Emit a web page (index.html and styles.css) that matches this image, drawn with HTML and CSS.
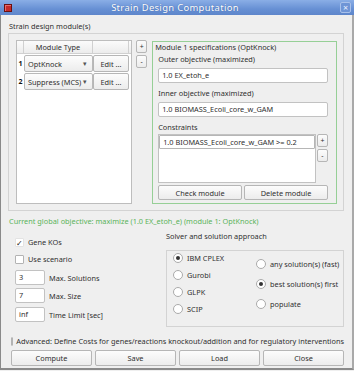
FILE: index.html
```html
<!DOCTYPE html>
<html>
<head>
<meta charset="utf-8">
<link rel="stylesheet" href="styles.css">
</head>
<body>
<div class="window">
  <div class="titlebar">
    <span class="app-icon"></span>
    <span class="title">Strain Design Computation</span>
    <span class="close-btn">×</span>
  </div>
  <div class="content">
    <div class="section-label">Strain design module(s)</div>
    <div class="modules-frame">
      <div class="table">
        <div class="trow thead">
          <div class="vh"></div>
          <div class="c-type">Module Type</div>
          <div class="c-edit"></div>
          <div class="c-rest"></div>
        </div>
        <div class="trow tr">
          <div class="vh num">1</div>
          <div class="c-type"><div class="combo"><span>OptKnock</span><span class="arrow">▾</span></div></div>
          <div class="c-edit"><div class="btn cellbtn">Edit ...</div></div>
        </div>
        <div class="trow tr">
          <div class="vh num">2</div>
          <div class="c-type"><div class="combo"><span>Suppress (MCS)</span><span class="arrow">▾</span></div></div>
          <div class="c-edit"><div class="btn cellbtn">Edit ...</div></div>
        </div>
      </div>
      <div class="pm-col">
        <div class="btn small">+</div>
        <div class="btn small">-</div>
      </div>
      <div class="spec-group">
        <div class="spec-title">Module 1 specifications (OptKnock)</div>
        <div class="lbl">Outer objective (maximized)</div>
        <div class="input wide">1.0 EX_etoh_e</div>
        <div class="lbl">Inner objective (maximized)</div>
        <div class="input wide">1.0 BIOMASS_Ecoli_core_w_GAM</div>
        <div class="lbl">Constraints</div>
        <div class="constraints">
          <div class="list">
            <div class="list-item">1.0 BIOMASS_Ecoli_core_w_GAM &gt;= 0.2</div>
          </div>
          <div class="pm-col tight">
            <div class="btn small">+</div>
            <div class="btn small">-</div>
          </div>
        </div>
        <div class="spec-buttons">
          <div class="btn">Check module</div>
          <div class="btn">Delete module</div>
        </div>
      </div>
    </div>
    <div class="global-obj">Current global objective: maximize (1.0 EX_etoh_e) (module 1: OptKnock)</div>
    <div class="lower">
      <div class="options">
        <div class="check-row first"><span class="checkbox checked">✓</span>Gene KOs</div>
        <div class="check-row"><span class="checkbox"></span>Use scenario</div>
        <div class="field-row r1"><div class="input num-in">3</div>Max. Solutions</div>
        <div class="field-row r2"><div class="input num-in">7</div>Max. Size</div>
        <div class="field-row r3"><div class="input num-in">inf</div>Time Limit [sec]</div>
      </div>
      <div class="solver">
        <div class="solver-label">Solver and solution approach</div>
        <div class="solver-box">
          <div class="radio-col left">
            <div class="radio-row"><span class="radio on"></span>IBM CPLEX</div>
            <div class="radio-row"><span class="radio"></span>Gurobi</div>
            <div class="radio-row"><span class="radio"></span>GLPK</div>
            <div class="radio-row"><span class="radio"></span>SCIP</div>
          </div>
          <div class="radio-col right">
            <div class="radio-row"><span class="radio"></span>any solution(s) (fast)</div>
            <div class="radio-row"><span class="radio on"></span>best solution(s) first</div>
            <div class="radio-row"><span class="radio"></span>populate</div>
          </div>
        </div>
      </div>
    </div>
    <div class="advanced"><span class="checkbox"></span>Advanced: Define Costs for genes/reactions knockout/addition and for regulatory interventions</div>
    <div class="bottom-buttons">
      <div class="btn">Compute</div>
      <div class="btn">Save</div>
      <div class="btn">Load</div>
      <div class="btn">Close</div>
    </div>
  </div>
</div>
</body>
</html>
```

FILE: styles.css
```css
* { box-sizing: border-box; }
html, body { margin: 0; padding: 0; }
body {
  width: 354px;
  height: 371px;
  overflow: hidden;
  font-family: "Noto Sans", sans-serif;
  font-size: 7.35px;
  color: #2f2f2f;
  background: #efefef;
  white-space: nowrap;
}
.window {
  width: 354px;
  height: 370px;
  background: #efefef;
  border-left: 1px solid #8a8a8a;
  border-right: 2px solid #a9a9a9;
  border-bottom: 2px solid #8a8a8a;
  display: flex;
  flex-direction: column;
}
.titlebar {
  height: 15px;
  flex: none;
  background: linear-gradient(#8aaee6, #6790d4 60%, #5e86cb);
  display: flex;
  align-items: center;
  margin-left: -1px;
  margin-right: -2px;
}
.app-icon {
  width: 8px;
  height: 8px;
  margin-left: 4px;
  background: #c42a2a;
  border: 1px solid #6a1010;
  box-shadow: inset 1px 1px 0 #e86a6a;
}
.title {
  flex: 1;
  text-align: center;
  color: #fff;
  font-size: 9.4px;
  letter-spacing: 0.35px;
  text-shadow: 0 0 1px #3b5f9e;
  margin-left: -2px;
}
.close-btn {
  width: 11px;
  height: 11px;
  margin-right: 3px;
  border: 1px solid #a9c1ea;
  border-radius: 2px;
  background: #6f95d6;
  color: #e8f0ff;
  font-size: 9px;
  line-height: 9px;
  text-align: center;
}
.content {
  flex: 1;
  padding: 5px 8px 0 7px;
  display: flex;
  flex-direction: column;
}
.section-label {
  height: 12px;
  line-height: 12px;
  padding-left: 1px;
  margin-bottom: 1px;
}
.modules-frame {
  height: 178px;
  border: 1px solid #d3d3d3;
  padding: 6px 6px 6px 7px;
  display: flex;
  align-items: stretch;
}
.table {
  width: 117px;
  background: #fff;
  border: 1px solid #bdbdbd;
  display: flex;
  flex-direction: column;
  gap: 1px;
}
.trow { display: flex; }
.thead {
  height: 13px;
  line-height: 12px;
  background: linear-gradient(#fbfbfb, #ececec);
  border-bottom: 1px solid #d0d0d0;
}
.thead > div { border-right: 1px solid #d0d0d0; }
.thead .c-rest { border-right: none; flex: 1; }
.vh { width: 7px; flex: none; }
.c-type { width: 69px; text-align: center; flex: none; }
.c-edit { width: 36px; flex: none; }
.tr { height: 17px; }
.tr .c-type, .tr .c-edit { height: 17px; }
.num {
  font-weight: bold;
  color: #111;
  text-align: center;
  line-height: 17px;
  font-size: 7px;
}
.combo {
  height: 17px;
  border: 1px solid #b9b9b9;
  border-radius: 2px;
  background: linear-gradient(#fdfdfd, #ececec);
  display: flex;
  align-items: center;
  justify-content: space-between;
  padding: 0 5px 0 3px;
  text-align: left;
  overflow: hidden;
}
.arrow { font-size: 7px; color: #555; }
.btn {
  border: 1px solid #b6b6b6;
  border-radius: 2px;
  background: linear-gradient(#fcfcfc, #ececec);
  display: flex;
  align-items: center;
  justify-content: center;
  color: #2f2f2f;
}
.cellbtn { height: 17px; }
.pm-col {
  display: flex;
  flex-direction: column;
  gap: 2px;
  margin-left: 4px;
  width: 11px;
}
.pm-col .small {
  height: 13px;
  font-size: 7px;
}
.pm-col.tight { margin-left: 1px; }
.spec-group {
  margin-left: 5px;
  margin-top: 1px;
  width: 186px;
  border: 1px solid #96cf96;
  padding: 0 8px 0 1px;
  display: flex;
  flex-direction: column;
}
.spec-title { height: 10px; line-height: 10px; padding-left: 1px; }
.lbl { height: 12px; line-height: 12px; padding-left: 4px; margin-top: 1px; }
.input {
  background: #fff;
  border: 1px solid #c2c2c2;
  border-radius: 2px;
  height: 15px;
  line-height: 13px;
  padding-left: 3px;
}
.input.wide { margin-left: 4px; margin-top: 3px; margin-bottom: 3px; }
.constraints {
  display: flex;
  margin-left: 4px;
  margin-top: 1px;
  height: 49px;
}
.list {
  flex: 1;
  background: #fff;
  border: 1px solid #c2c2c2;
}
.list-item {
  height: 14px;
  line-height: 12px;
  border: 1px solid #b6b6b6;
  border-radius: 1px;
  padding-left: 3px;
}
.spec-buttons {
  display: flex;
  gap: 2px;
  margin-left: 4px;
  margin-top: 2px;
}
.spec-buttons .btn { flex: 1; height: 15px; }
.global-obj {
  color: #5ab35a;
  height: 12px;
  line-height: 12px;
  margin-top: 4px;
  padding-left: 1px;
}
.lower {
  display: flex;
  height: 103px;
  margin-top: 2px;
}
.options {
  width: 158px;
  padding-left: 7px;
  display: flex;
  flex-direction: column;
}
.check-row {
  display: flex;
  align-items: center;
  height: 12px;
  line-height: 12px;
}
.check-row.first { margin-top: 7px; }
.check-row + .check-row { margin-top: 5px; }
.checkbox {
  width: 9px;
  height: 9px;
  background: #fff;
  border: 1px solid #b3b3b3;
  border-radius: 1px;
  margin-right: 4px;
  font-size: 8px;
  line-height: 7px;
  text-align: center;
  color: #222;
}
.checkbox.checked { border-color: #e3e3e3; }
.field-row {
  display: flex;
  align-items: center;
  height: 15px;
}
.field-row.r1 { margin-top: 5px; }
.field-row.r2 { margin-top: 3px; }
.field-row.r3 { margin-top: 4px; }
.num-in { width: 30px; margin-right: 4px; }
.solver {
  flex: 1;
  display: flex;
  flex-direction: column;
}
.solver-label {
  height: 12px;
  line-height: 12px;
  margin-top: 1px;
}
.solver-box {
  margin-top: 8px;
  height: 77px;
  border: 1px solid #d3d3d3;
  display: flex;
}
.radio-col { display: flex; flex-direction: column; }
.radio-col.left { width: 89px; padding-left: 6px; padding-top: 1px; gap: 5px; }
.radio-col.right { padding-top: 7px; gap: 8px; }
.radio-row {
  display: flex;
  align-items: center;
  height: 12px;
}
.radio {
  width: 10px;
  height: 10px;
  border-radius: 50%;
  border: 1px solid #aaaaaa;
  background: #fff;
  margin-right: 4px;
  display: flex;
  align-items: center;
  justify-content: center;
}
.radio.on::after {
  content: "";
  width: 4px;
  height: 4px;
  border-radius: 50%;
  background: #333;
}
.advanced {
  display: flex;
  align-items: center;
  height: 12px;
  margin-top: 3px;
  padding-left: 3px;
}
.advanced .checkbox { margin-right: 3px; }
.bottom-buttons {
  display: flex;
  gap: 3px;
  margin-top: 3px;
  padding-left: 3px;
}
.bottom-buttons .btn { flex: 1; height: 16px; }
```
